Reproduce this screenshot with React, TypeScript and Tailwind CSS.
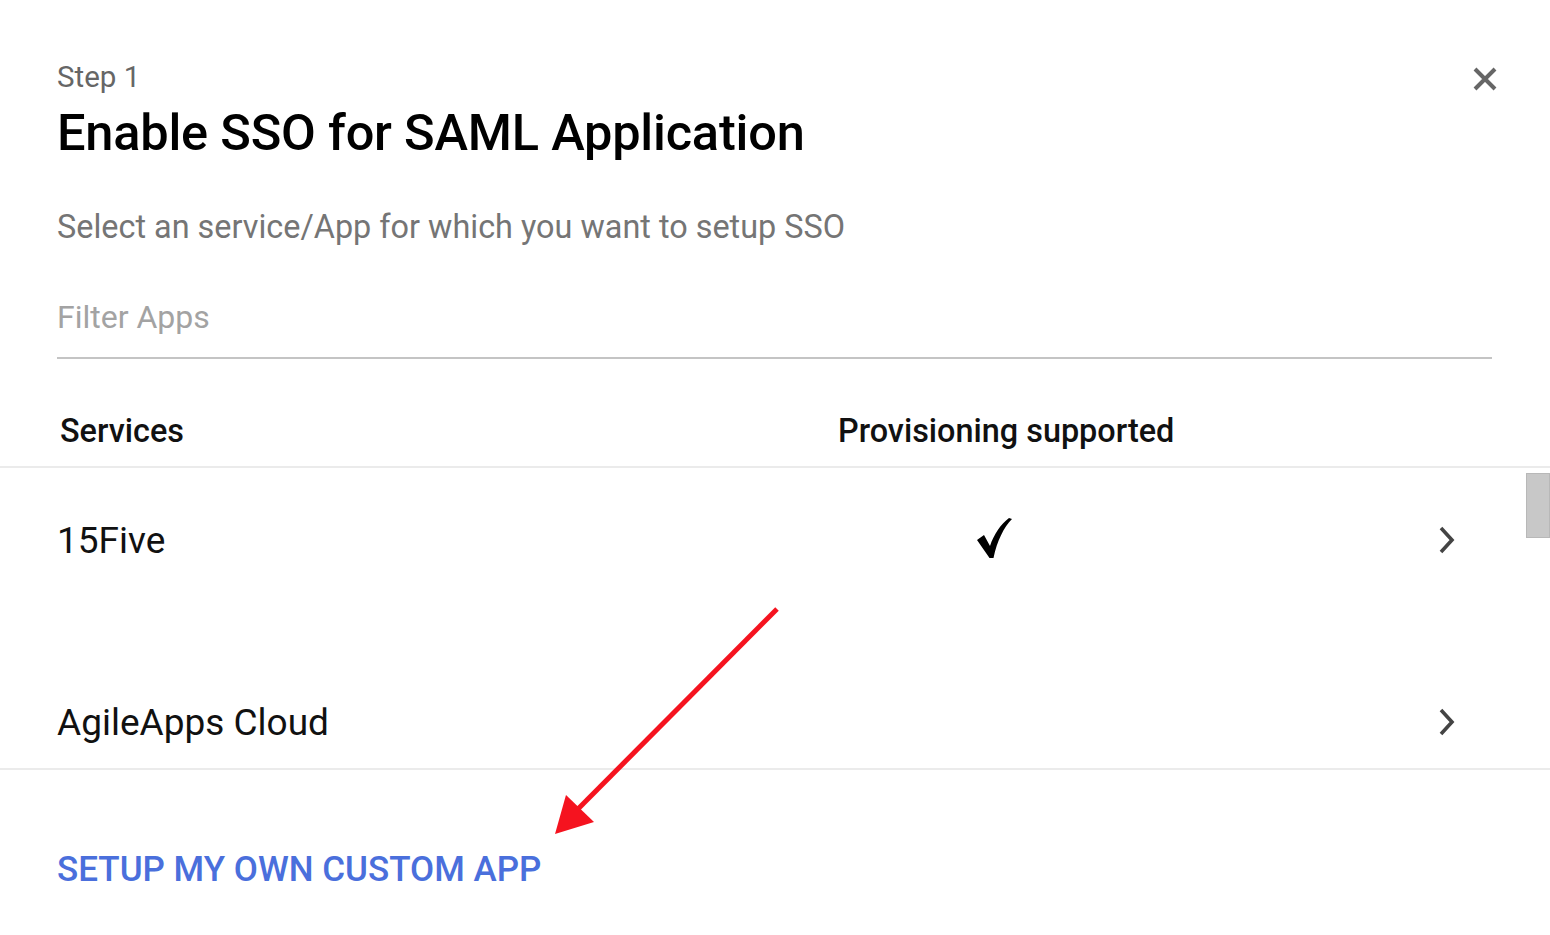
import React from 'react';

const apps = [
  { name: '15Five', provisioning: true },
  { name: 'AgileApps Cloud', provisioning: false },
];

const Check = () => (
  <svg width="36" height="42" viewBox="0 0 36 42" className="mt-[-7px] text-black">
    <path
      d="M1 23 L8 18 L14 29 C18 17 25 7 33 1 L36 2 C28 10 21 24 17.5 41 L13.5 41 Z"
      fill="currentColor"
    />
  </svg>
);

const Chevron = () => (
  <svg width="18" height="30" viewBox="0 0 18 30" fill="none" className="mt-[-3px] text-[#444]">
    <path d="M3 3 L14 15 L3 27" stroke="currentColor" strokeWidth="3.6" />
  </svg>
);

export default function App() {
  return (
    <div
      className="relative w-[1550px] h-[935px] overflow-hidden bg-white"
      style={{ fontFamily: 'Roboto, "Noto Sans", sans-serif' }}
    >
      <div className="px-[57px] pt-[58px]">
        <div className="flex items-start justify-between">
          <div className="flex flex-col">
            <span className="text-[29.5px] leading-[38px] text-[#666]">Step 1</span>
            <h1 className="mt-[7px] text-[50.5px] leading-[60px] font-medium text-black tracking-[-0.2px]">
              Enable SSO for SAML Application
            </h1>
          </div>
          <button className="mr-[-9px] mt-[4px] p-1 text-[#666]">
            <svg width="26" height="26" viewBox="0 0 26 26">
              <path d="M3 3 L23 23 M23 3 L3 23" stroke="currentColor" strokeWidth="4" />
            </svg>
          </button>
        </div>

        <p className="mt-[44px] text-[32.4px] leading-[40px] text-[#757575]">
          Select an service/App for which you want to setup SSO
        </p>

        <div className="mt-[50px] w-[1435px] border-b-2 border-[#c4c4c4] pb-[20px]">
          <input
            placeholder="Filter Apps"
            className="w-full bg-transparent text-[32px] leading-[40px] text-[#333] outline-none placeholder:text-[#a3a3a3]"
          />
        </div>
      </div>

      <div className="mt-[37px] flex h-[72px] items-center border-b-2 border-[#ebebeb] px-[60px] text-[32.4px] font-medium text-[#111]">
        <span className="w-[778px]">Services</span>
        <span>Provisioning supported</span>
      </div>

      <div className="relative h-[302px] overflow-hidden border-b-2 border-[#ebebeb]">
        <div className="mt-[-18px] flex flex-col">
          {apps.map((app) => (
            <div key={app.name} className="flex h-[182px] items-center pl-[57px] pr-[94px]">
              <span className="w-[917px] text-[37px] text-[#111]">{app.name}</span>
              <span className="flex w-[40px] justify-center">{app.provisioning && <Check />}</span>
              <span className="ml-auto flex">
                <Chevron />
              </span>
            </div>
          ))}
        </div>
        <div className="absolute right-0 top-[5px] h-[65px] w-[24px] border border-[#b8b8b8] bg-[#c8c8c8]" />
      </div>

      <div className="px-[57px] pt-[80px]">
        <a href="#" className="text-[35px] leading-[40px] font-medium uppercase text-[#4a6fdc]">
          Setup my own custom app
        </a>
      </div>

      <svg className="pointer-events-none absolute left-0 top-0" width="1550" height="935">
        <line x1="777" y1="609" x2="574" y2="813" stroke="#f5131f" strokeWidth="5" />
        <polygon points="555,834 566,795 594,822" fill="#f5131f" />
      </svg>
    </div>
  );
}
